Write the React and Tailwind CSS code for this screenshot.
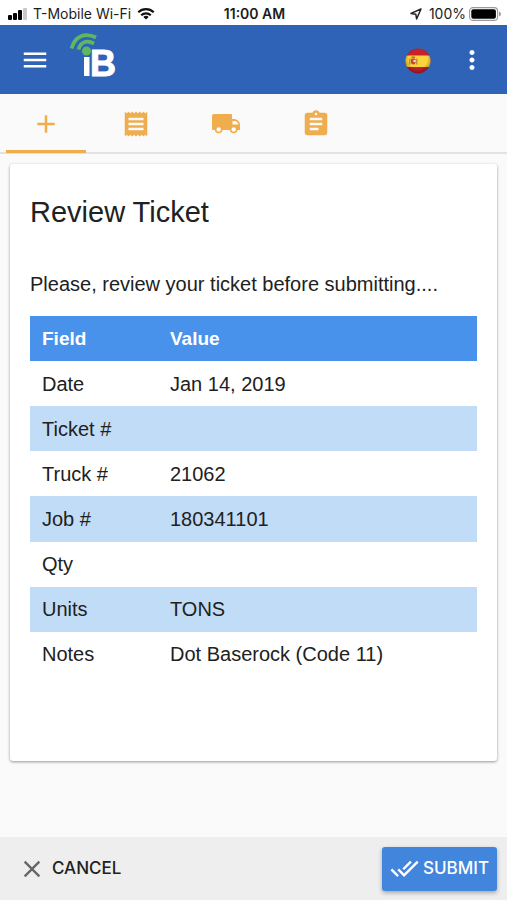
import { MdAdd, MdAssignment, MdClose, MdDoneAll, MdMenu, MdMoreVert, MdReceipt } from 'react-icons/md';

const tabs = [
  { name: 'Add ticket', icon: MdAdd, active: true },
  { name: 'Receipts', icon: MdReceipt },
  { name: 'Trucks', icon: TruckIcon },
  { name: 'Jobs', icon: MdAssignment }
];

const rows = [
  { field: 'Date', value: 'Jan 14, 2019' },
  { field: 'Ticket #', value: '' },
  { field: 'Truck #', value: '21062' },
  { field: 'Job #', value: '180341101' },
  { field: 'Qty', value: '' },
  { field: 'Units', value: 'TONS' },
  { field: 'Notes', value: 'Dot Baserock (Code 11)' }
];

function TruckIcon({ size }) {
  return (
    <svg width={size} height={size} viewBox="0 0 30 30" fill="currentColor" aria-hidden="true">
      <path
        fillRule="evenodd"
        d="M3 5h17q1 0 1 1v4h3q5 1.500 5 6v5h-2.500a4 4 0 0 1-7.600 0h-7.400a4 4 0 0 1-7.600 0H2q-1 0-1-1V7q0-2 2-2zM21.500 12v3.500h6q-.5-2.500-3-3.500z"
      />
      <circle cx="7.700" cy="20.500" r="3" fill="none" stroke="currentColor" strokeWidth="1.600" />
      <circle cx="22.700" cy="20.500" r="3" fill="none" stroke="currentColor" strokeWidth="1.600" />
      <circle cx="7.700" cy="20.500" r="2.200" fill="#fafafa" />
      <circle cx="22.700" cy="20.500" r="2.200" fill="#fafafa" />
    </svg>
  );
}

function StatusBar() {
  return (
    <div className="grid h-[25px] grid-cols-[1fr_auto_1fr] items-center bg-white pt-[2px] pr-[6px] pl-2 font-['Inter',sans-serif] text-[14px] leading-5 text-[#1c1c1c]">
      <div className="flex items-center gap-[6px] whitespace-nowrap">
        <svg width="19" height="12" viewBox="0 0 19 12" aria-hidden="true">
          <rect x="0" y="7" width="4" height="5" rx="1" />
          <rect x="5" y="5" width="4" height="7" rx="1" />
          <rect x="10" y="2" width="4" height="10" rx="1" />
          <rect x="15" y="0" width="4" height="12" rx="1" fill="#c9c9c9" />
        </svg>
        <span>T-Mobile Wi-Fi</span>
        <svg width="18" height="13" viewBox="0 0 18 13" fill="none" stroke="#111" strokeWidth="2.2" aria-hidden="true">
          <path d="M1.3 5.2a11 11 0 0 1 15.4 0M4.2 8.2a7 7 0 0 1 9.6 0" />
          <path d="M9 12.6 6.3 10a4 4 0 0 1 5.4 0z" fill="#111" stroke="none" />
        </svg>
      </div>
      <span className="font-semibold">11:00 AM</span>
      <div className="flex items-center justify-end gap-[3px]">
        <svg className="mr-1" width="12" height="12" viewBox="0 0 12 12" fill="none" stroke="#222" strokeWidth="1.5" strokeLinejoin="round" aria-hidden="true">
          <path d="M11 1 1 5.4l4.8.8L6.6 11z" />
        </svg>
        <span>100%</span>
        <svg width="32" height="14" viewBox="0 0 32 14" aria-hidden="true">
          <rect x="0.6" y="0.6" width="28" height="12.8" rx="3.5" fill="#fff" stroke="#999" strokeWidth="1.1" />
          <rect x="2.3" y="2.3" width="24.6" height="9.4" rx="2" />
          <path d="M30 4.5q2 .8 2 2.5t-2 2.5z" fill="#999" />
        </svg>
      </div>
    </div>
  );
}

function Logo() {
  return (
    <svg width="56" height="56" viewBox="0 0 56 56" role="img" aria-label="iB">
      <g fill="none" stroke="#5fb760" strokeWidth="3.8">
        <path d="M3.500 18.500C7 6 17 2 28 7.500" />
        <path d="M10.500 19.500C12.500 12.500 18 9.500 26 13.500" />
      </g>
      <circle cx="18.500" cy="21" r="4.500" fill="#5fb760" />
      <rect x="16" y="27" width="5.500" height="19" fill="#fff" />
      <text x="22" y="46" fill="#fff" stroke="#fff" strokeWidth="1" fontFamily="Liberation Sans, sans-serif" fontWeight="700" fontSize="36">B</text>
    </svg>
  );
}

function SpainFlag() {
  return (
    <svg width="26" height="26" viewBox="0 0 26 26" aria-hidden="true">
      <defs>
        <clipPath id="flag-round">
          <circle cx="13" cy="13" r="12.500" />
        </clipPath>
        <radialGradient id="flag-shade" cx="50%" cy="42%" r="58%">
          <stop offset="60%" stopColor="#000" stopOpacity="0" />
          <stop offset="100%" stopColor="#000" stopOpacity="0.35" />
        </radialGradient>
      </defs>
      <g clipPath="url(#flag-round)">
        <rect width="26" height="26" fill="#c9202a" />
        <rect y="7.500" width="26" height="11.500" fill="#fbd53e" />
        <rect x="4" y="10.500" width="1.500" height="6" fill="#c98a4a" />
        <rect x="11" y="10.500" width="1.500" height="6" fill="#c98a4a" />
        <path d="M6 11h4.500v4q-2.200 3-4.500 0z" fill="#c44a35" />
        <path d="M6.500 8.500h3.500v2h-3.500z" fill="#b9692f" />
        <path d="M8.500 12h2v2h-2z" fill="#f4e3d8" />
        <rect width="26" height="26" fill="url(#flag-shade)" />
      </g>
    </svg>
  );
}

export default function App() {
  return (
    <div className="flex min-h-screen flex-col bg-[#fafafa] font-['Liberation_Sans',Arial,sans-serif] text-[#212121]">
      <StatusBar />
      <header className="flex h-[69px] items-center bg-[#2e63b8] px-5 text-white">
        <button type="button" aria-label="Menu">
          <MdMenu size={30} />
        </button>
        <div className="mb-1 ml-[18px]">
          <Logo />
        </div>
        <button type="button" aria-label="Español" className="mt-[3px] ml-auto">
          <SpainFlag />
        </button>
        <button type="button" aria-label="More" className="ml-[26px]">
          <MdMoreVert size={30} />
        </button>
      </header>

      <nav className="flex h-[60px] border-b-2 border-[#e2e2e2] px-[6px]">
        {tabs.map(({ name, icon: Icon, active }) => (
          <button
            key={name}
            type="button"
            aria-label={name}
            className={`-mb-[1px] mr-[10px] flex w-[80px] items-center justify-center border-b-[3px] pt-1 text-[#f0ad4e] ${active ? 'border-[#f0ad4e]' : 'border-transparent'}`}
          >
            <Icon size={30} />
          </button>
        ))}
      </nav>

      <main className="flex-1 p-[10px]">
        <section className="rounded-[3px] bg-white px-5 pt-[30px] pb-[84px] shadow-[0_1px_3px_rgba(0,0,0,0.4)]">
          <h1 className="text-[29px] leading-9">Review Ticket</h1>
          <p className="mt-[42px] text-[20px] leading-6">Please, review your ticket before submitting....</p>
          <table className="mt-5 h-[361px] w-full text-left text-[20px] leading-6">
            <thead className="bg-[#4892ec] text-[19px] text-white">
              <tr className="h-[45px]">
                <th className="w-[128px] px-3">Field</th>
                <th className="px-3">Value</th>
              </tr>
            </thead>
            <tbody>
              {rows.map(row => (
                <tr key={row.field} className="even:bg-[#c1dcf7]">
                  <td className="px-3">{row.field}</td>
                  <td className="px-3">{row.value}</td>
                </tr>
              ))}
            </tbody>
          </table>
        </section>
      </main>

      <footer className="flex h-[63px] items-center justify-between bg-[#eeeeee] px-[10px] font-['Inter',sans-serif] text-[17px] font-medium">
        <button type="button" className="flex items-center gap-[6px] pl-2">
          <MdClose size={28} className="text-[#666]" />
          CANCEL
        </button>
        <button type="button" className="flex h-11 items-center gap-1 rounded-[3px] bg-[#4285dd] px-2 text-white shadow-[0_2px_4px_rgba(0,0,0,0.3)]">
          <MdDoneAll size={29} />
          SUBMIT
        </button>
      </footer>
    </div>
  );
}
